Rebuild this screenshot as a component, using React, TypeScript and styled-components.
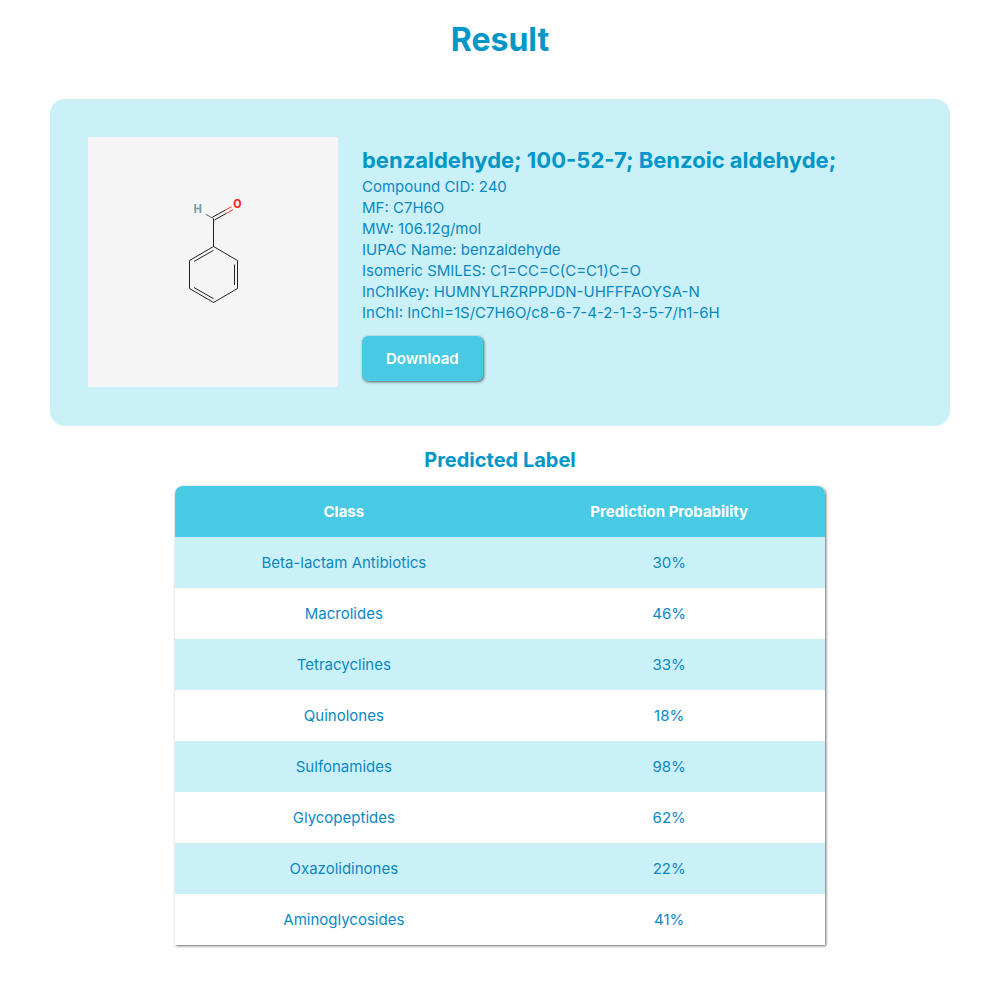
import React from "react";
import styled, { createGlobalStyle } from "styled-components";

const GlobalStyle = createGlobalStyle`
  * { box-sizing: border-box; }
  body {
    margin: 0;
    background: #ffffff;
    color: #0a88c2;
    font-family: Inter, "Open Sans", sans-serif;
    font-size: 15px;
    line-height: 21px;
  }
`;

const Page = styled.main`
  display: flex;
  flex-direction: column;
  align-items: center;
  padding: 16px 44px 48px 50px;
`;

const Title = styled.h1`
  margin: 0 0 35px;
  color: #0096c7;
  font-size: 32px;
  line-height: 48px;
  font-weight: 700;
`;

const Card = styled.section`
  display: flex;
  align-items: center;
  gap: 24px;
  width: 100%;
  padding: 38px 38px 39px;
  border-radius: 15px;
  background: #caf0f8;
`;

const Structure = styled.svg`
  flex: none;
  width: 250px;
  height: 250px;
  background: #f5f5f5;
`;

const Details = styled.div`
  flex: 1;
  min-width: 0;
`;

const CompoundName = styled.h2`
  margin: 0;
  color: #0096c7;
  font-size: 22px;
  line-height: 32px;
  font-weight: 700;
`;

const Facts = styled.ul`
  list-style: none;
  margin: 0 0 13px;
  padding: 0;
  overflow-wrap: anywhere;
`;

const DownloadButton = styled.button`
  padding: 12px 24px;
  border: 0;
  border-radius: 6px;
  background: #48cae4;
  box-shadow: 1px 1px 3px rgba(0, 0, 0, 0.6);
  color: #ffffff;
  font: inherit;
  font-weight: 600;
  cursor: pointer;
`;

const SectionTitle = styled.h3`
  margin: 19px 0 11px;
  color: #0096c7;
  font-size: 20px;
  line-height: 30px;
  font-weight: 700;
`;

const ResultTable = styled.table`
  width: 72.3%;
  table-layout: fixed;
  border-collapse: collapse;
  border-radius: 8px 8px 0 0;
  overflow: hidden;
  box-shadow: 1px 1px 3px rgba(0, 0, 0, 0.6);
  text-align: center;
`;

const HeadCell = styled.th<{ $wide?: boolean }>`
  width: ${(p) => (p.$wide ? "52%" : "48%")};
  padding: 15px;
  background: #48cae4;
  color: #ffffff;
  font-weight: 700;
`;

const BodyRow = styled.tr`
  background: #ffffff;
  &:nth-child(odd) { background: #caf0f8; }
`;

const Cell = styled.td`
  padding: 15px;
`;

const AtomLabel = styled.text`
  font-family: Roboto, sans-serif;
  font-size: 12px;
  font-weight: 700;
  text-anchor: middle;
`;

const facts = [
  "Compound CID: 240",
  "MF: C7H6O",
  "MW: 106.12g/mol",
  "IUPAC Name: benzaldehyde",
  "Isomeric SMILES: C1=CC=C(C=C1)C=O",
  "InChIKey: HUMNYLRZRPPJDN-UHFFFAOYSA-N",
  "InChI: InChI=1S/C7H6O/c8-6-7-4-2-1-3-5-7/h1-6H",
];

const predictions = [
  { name: "Beta-lactam Antibiotics", probability: 30 },
  { name: "Macrolides", probability: 46 },
  { name: "Tetracyclines", probability: 33 },
  { name: "Quinolones", probability: 18 },
  { name: "Sulfonamides", probability: 98 },
  { name: "Glycopeptides", probability: 62 },
  { name: "Oxazolidinones", probability: 22 },
  { name: "Aminoglycosides", probability: 41 },
];

function Molecule() {
  return (
    <Structure viewBox="0 0 250 250" role="img" aria-label="Structure of benzaldehyde">
      <g fill="none" stroke="#222222" strokeWidth="1">
        <path d="M125.5 109.5 L149.5 123.5 V151.5 L125.5 165.5 L101.5 151.5 V123.5 Z" />
        <path d="M106 124.5 L125.5 113.3 M146.5 127.5 V148 M106 150.5 L125.5 161.7" />
        <path d="M125.5 109.5 V81.5 M124.4 80.2 L137.5 73 M126.4 83 L138.5 76.3" />
        <path d="M125.5 81.5 L117.7 77.3" stroke="#4e6a6a" />
      </g>
      <path d="M137.5 73 L143.5 69.7 M138.5 76.3 L145 72.7" stroke="#ff2a2a" fill="none" />
      <AtomLabel x="149.5" y="71" fill="#ff2020">O</AtomLabel>
      <AtomLabel x="109.7" y="76" fill="#7a9e9e">H</AtomLabel>
    </Structure>
  );
}

export default function App() {
  return (
    <>
      <GlobalStyle />
      <Page>
        <Title>Result</Title>
        <Card>
          <Molecule />
          <Details>
            <CompoundName>benzaldehyde; 100-52-7; Benzoic aldehyde;</CompoundName>
            <Facts>
              {facts.map((fact) => (
                <li key={fact}>{fact}</li>
              ))}
            </Facts>
            <DownloadButton type="button">Download</DownloadButton>
          </Details>
        </Card>
        <SectionTitle id="predicted-label">Predicted Label</SectionTitle>
        <ResultTable aria-labelledby="predicted-label">
          <thead>
            <tr>
              <HeadCell scope="col" $wide>Class</HeadCell>
              <HeadCell scope="col">Prediction Probability</HeadCell>
            </tr>
          </thead>
          <tbody>
            {predictions.map((p) => (
              <BodyRow key={p.name}>
                <Cell>{p.name}</Cell>
                <Cell>{p.probability}%</Cell>
              </BodyRow>
            ))}
          </tbody>
        </ResultTable>
      </Page>
    </>
  );
}
